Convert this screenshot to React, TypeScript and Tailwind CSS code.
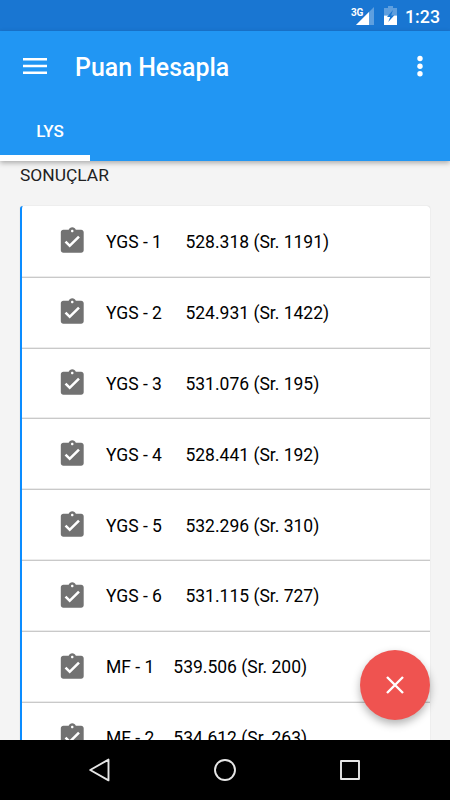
import React from 'react'

interface Result {
  name: string
  score: string
  rank: number
}

const ygsResults: Result[] = [
  { name: 'YGS - 1', score: '528.318', rank: 1191 },
  { name: 'YGS - 2', score: '524.931', rank: 1422 },
  { name: 'YGS - 3', score: '531.076', rank: 195 },
  { name: 'YGS - 4', score: '528.441', rank: 192 },
  { name: 'YGS - 5', score: '532.296', rank: 310 },
  { name: 'YGS - 6', score: '531.115', rank: 727 },
]

const mfResults: Result[] = [
  { name: 'MF - 1', score: '539.506', rank: 200 },
  { name: 'MF - 2', score: '534.612', rank: 263 },
]

const StatusBar: React.FC = () => (
  <div className="flex h-[31px] shrink-0 items-center justify-end bg-[#1976d2] pr-[10px] text-white">
    <span className="mb-[6px] text-[10px] leading-none font-bold tracking-tight">3G</span>
    <svg className="-ml-[7px] mt-px h-[18px] w-[18px]" viewBox="0 0 18 18">
      <path d="M0 18L18 0V18Z" fill="#fff" fillOpacity=".3" />
      <path d="M0 18L13 5V18Z" fill="#fff" />
    </svg>
    <svg className="ml-[10px] h-[19px] w-[13px]" viewBox="0 0 13 19">
      <path d="M0 2H4V0H9V2H13V9.5H0Z" fill="#fff" fillOpacity=".3" />
      <path d="M0 9.5H13V19H0Z" fill="#fff" />
      <path d="M9 4L3 11H6.2L4.2 16L10.4 9.3H7.2Z" fill="#1976d2" />
    </svg>
    <span className="ml-[8px] mt-[2px] text-[17.8px] leading-none font-medium">1:23</span>
  </div>
)

const AppBar: React.FC = () => (
  <header className="relative z-10 flex h-[130px] shrink-0 flex-col bg-[#2196f3] text-white shadow-[0_2px_5px_rgba(0,0,0,0.3)]">
    <div className="flex h-[70px] items-center pr-[27px] pl-[23px]">
      <svg className="h-[16px] w-[24px]" viewBox="0 0 24 16" fill="#fff">
        <path d="M0 0H24V2.6H0ZM0 6.7H24V9.3H0ZM0 13.4H24V16H0Z" />
      </svg>
      <h1 className="mt-[2px] ml-[28px] text-[24.9px] leading-[25px] font-medium">Puan Hesapla</h1>
      <svg className="ml-auto h-[22px] w-[6px]" viewBox="0 0 6 22" fill="#fff">
        <circle cx="3" cy="3.5" r="2.7" />
        <circle cx="3" cy="11.2" r="2.7" />
        <circle cx="3" cy="18.8" r="2.7" />
      </svg>
    </div>
    <div className="flex h-[60px] w-[90px] items-center justify-center border-b-6 border-white pt-[8px] pl-[10px] text-[17px] font-medium">
      LYS
    </div>
  </header>
)

const ResultRow: React.FC<Result & { gap: string }> = ({ name, score, rank, gap }) => (
  <li className="flex h-[70.86px] shrink-0 items-center border-b border-[#c9c9c9] pl-[35px] shadow-[inset_0_-1px_0_#ececec]">
    <svg className="h-[30.5px] w-[30.5px]" viewBox="0 0 24 24" fill="#727272">
      <path d="M19 3h-4.18C14.4 1.84 13.3 1 12 1s-2.4.84-2.82 2H5c-1.1 0-2 .9-2 2v14c0 1.1.9 2 2 2h14c1.1 0 2-.9 2-2V5c0-1.1-.9-2-2-2zm-7 0c.55 0 1 .45 1 1s-.45 1-1 1-1-.45-1-1 .45-1 1-1zm-2 14l-4-4 1.41-1.41L10 14.17l6.59-6.59L18 9l-8 8z" />
    </svg>
    <span className={`flex ${gap} pt-px pl-[18.5px] text-[17.5px]`}>
      <span>{name}</span>
      <span>{score} (Sr. {rank})</span>
    </span>
  </li>
)

const NavBar: React.FC = () => (
  <nav className="relative z-10 flex h-[60px] shrink-0 items-center justify-center gap-[101px] bg-black">
    <svg className="h-6 w-6" viewBox="0 0 24 24" fill="none" stroke="#e6e6e6" strokeWidth="1.9" strokeLinejoin="round">
      <path d="M20.5 1.6V22.4L2.2 12Z" />
    </svg>
    <svg className="h-6 w-6" viewBox="0 0 24 24" fill="none" stroke="#e6e6e6" strokeWidth="1.9">
      <circle cx="12" cy="12" r="10" />
    </svg>
    <svg className="h-6 w-6" viewBox="0 0 24 24" fill="none" stroke="#e6e6e6" strokeWidth="1.9" strokeLinejoin="round">
      <path d="M3 3H21V21H3Z" />
    </svg>
  </nav>
)

const App: React.FC = () => {
  return (
    <div className="relative flex h-[800px] w-[450px] flex-col overflow-hidden bg-[#f4f4f4] font-[Roboto,sans-serif] text-black">
      <StatusBar />
      <AppBar />

      <main className="flex min-h-0 flex-1 flex-col overflow-hidden px-5">
        <h2 className="h-[45px] shrink-0 pt-px text-[17.4px] leading-[26px] text-[#212121]">SONUÇLAR</h2>
        <ul className="flex flex-col rounded-[3px] border-l-2 border-[#0a8cff] bg-white pt-[0.8px] shadow-[0_0_1px_rgba(0,0,0,0.25)]">
          {ygsResults.map((result) => (
            <ResultRow key={result.name} gap="gap-[23.5px]" {...result} />
          ))}
          {mfResults.map((result) => (
            <ResultRow key={result.name} gap="gap-[19px]" {...result} />
          ))}
        </ul>
      </main>

      <NavBar />

      {/* Floating close button */}
      <button className="absolute top-[650px] left-[360px] z-20 flex h-[70px] w-[70px] items-center justify-center rounded-full bg-[#ef5350] shadow-[0_4px_8px_rgba(0,0,0,0.3)]">
        <svg className="h-[18px] w-[18px]" viewBox="0 0 18 18" stroke="#fff" strokeWidth="2.4">
          <path d="M1 1L17 17M17 1L1 17" />
        </svg>
      </button>
    </div>
  )
}

export default App
